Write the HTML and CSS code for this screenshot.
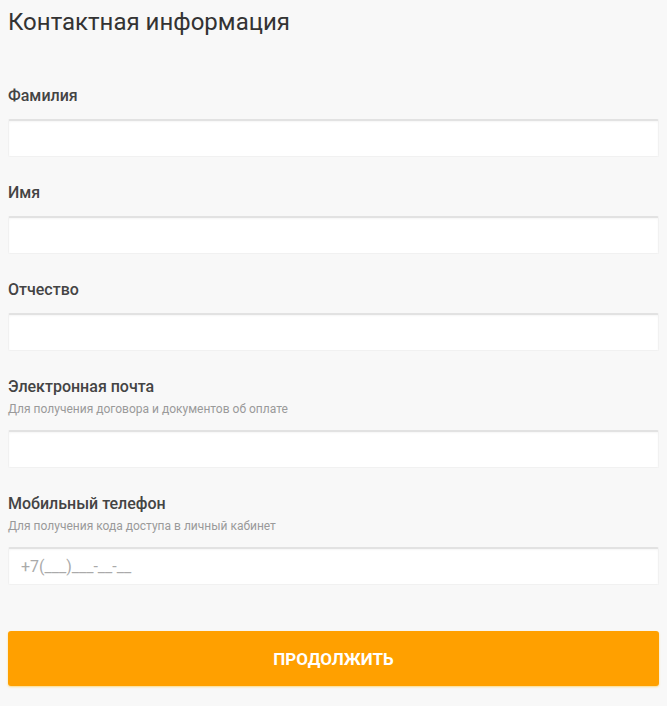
FILE: index.html
```html
<!DOCTYPE html>
<html lang="ru">
<head>
    <meta charset="UTF-8">
    <meta name="viewport" content="width=device-width, initial-scale=1.0">
    <title>Контактная информация</title>
    <link rel="stylesheet" href="styles.css">
</head>
<body>
    <form class="contact-form">
        <h1 class="title">Контактная информация</h1>

        <div class="field first">
            <label class="label" for="last-name">Фамилия</label>
            <input class="input" id="last-name" type="text">
        </div>

        <div class="field">
            <label class="label" for="first-name">Имя</label>
            <input class="input" id="first-name" type="text">
        </div>

        <div class="field">
            <label class="label" for="middle-name">Отчество</label>
            <input class="input" id="middle-name" type="text">
        </div>

        <div class="field">
            <label class="label" for="email">Электронная почта</label>
            <div class="hint">Для получения договора и документов об оплате</div>
            <input class="input" id="email" type="email">
        </div>

        <div class="field">
            <label class="label" for="phone">Мобильный телефон</label>
            <div class="hint">Для получения кода доступа в личный кабинет</div>
            <input class="input" id="phone" type="tel" placeholder="+7(___)___-__-__">
        </div>

        <button class="submit" type="button">Продолжить</button>
    </form>
</body>
</html>
```

FILE: styles.css
```css
* { box-sizing: border-box; margin: 0; padding: 0; }
body { font-family: Roboto, "Liberation Sans", Arial, sans-serif; background: #f8f8f8; color: #333; }

.contact-form {
    display: flex;
    flex-direction: column;
    padding: 8px;
}

.title {
    font-size: 24px;
    font-weight: 400;
    line-height: 28px;
    color: #333;
}

.field {
    display: flex;
    flex-direction: column;
    margin-top: 26px;
}

.field.first { margin-top: 50px; }

.label {
    font-size: 16px;
    font-weight: 500;
    line-height: 20px;
    color: #444;
}

.hint {
    margin-top: 5px;
    font-size: 12px;
    line-height: 14px;
    color: #9a9a9a;
}

.label + .input { margin-top: 13px; }
.hint + .input { margin-top: 14px; }

.input {
    height: 38px;
    width: 100%;
    padding: 0 12px;
    background: #fff;
    border: 1px solid #f1f1f1;
    border-top: 2px solid #e2e2e2;
    border-radius: 2px;
    box-shadow: inset 0 1px 2px rgba(0,0,0,0.04);
    font-family: inherit;
    font-size: 16px;
    color: #333;
    outline: none;
}

.input::placeholder { color: #aaa; }

.submit {
    margin-top: 46px;
    height: 55px;
    width: 100%;
    background: #ffa000;
    border: none;
    border-radius: 3px;
    box-shadow: 0 1px 2px rgba(255, 200, 60, 0.6);
    color: #fff;
    font-family: inherit;
    font-size: 17px;
    font-weight: 700;
    text-transform: uppercase;
    cursor: pointer;
}
```
